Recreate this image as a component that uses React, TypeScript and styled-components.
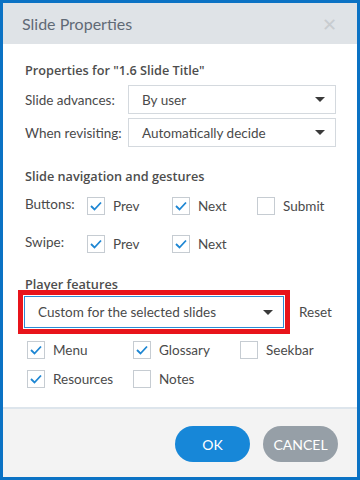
import styled, { createGlobalStyle } from "styled-components";

const GlobalStyle = createGlobalStyle`
	html, body {
		margin: 0;
		padding: 0;
		background: #fff;
	}
	body {
		font-family: Lato, "Open Sans", sans-serif;
		color: #4a4a4a;
	}
`;

const Dialog = styled.div`
	width: 360px;
	height: 480px;
	box-sizing: border-box;
	border: 3px solid #0b72c4;
	display: flex;
	flex-direction: column;
	background: #fff;
`;

const Header = styled.div`
	height: 41px;
	background: #dfe3e7;
	display: flex;
	align-items: center;
	justify-content: space-between;
	padding: 0 20px 0 19px;

	h1 {
		margin: 0;
		font-size: 16px;
		font-weight: 400;
		color: #5f6a76;
	}
`;

const Close = styled.span`
	font-size: 18px;
	color: #c8ccd0;
	line-height: 1;
`;

const Body = styled.div`
	flex: 1;
	padding: 18px 21px 0 22px;
	border-bottom: 2px solid #dde5ec;
`;

const SectionTitle = styled.div<{ $after: number }>`
	font-family: "Open Sans", sans-serif;
	font-size: 12.7px;
	line-height: 16px;
	font-weight: 600;
	color: #4d4d4d;
	margin-bottom: ${(p) => p.$after}px;
`;

const FormRow = styled.div`
	display: grid;
	grid-template-columns: 103px 1fr;
	align-items: center;
	margin-bottom: 4px;
	font-size: 13.5px;
`;

const Select = styled.div<{ $focused?: boolean }>`
	height: 29px;
	box-sizing: border-box;
	border: 1px solid ${(p) => (p.$focused ? "#2a8bd6" : "#d4d9de")};
	display: flex;
	align-items: center;
	justify-content: space-between;
	padding: 0 10px 0 13px;
	font-size: 13.5px;
	color: #4a4a4a;
	background: #fff;
`;

const Caret = styled.span`
	width: 0;
	height: 0;
	border-left: 5px solid transparent;
	border-right: 5px solid transparent;
	border-top: 5px solid #3a3a3a;
`;

const Section = styled.div<{ $gap: number }>`
	margin-top: ${(p) => p.$gap}px;
`;

const NavRow = styled.div`
	display: grid;
	grid-template-columns: 62px 85px 85px 1fr;
	align-items: center;
	height: 18px;
	margin-bottom: 20px;
	font-size: 13.5px;

	& > span:first-child {
		margin-top: -5px;
	}
`;

const Check = styled.label`
	display: flex;
	align-items: center;
	gap: 8px;
	font-size: 13.5px;
	color: #4a4a4a;
`;

const Box = styled.span`
	width: 18px;
	height: 18px;
	box-sizing: border-box;
	border: 1px solid #c6ccd2;
	background: #fff;
	display: flex;
	align-items: center;
	justify-content: center;
	flex-shrink: 0;
`;

const Checkbox = ({ label, checked }: { label: string; checked?: boolean }) => (
	<Check>
		<Box>
			{checked && (
				<svg width="12" height="10" viewBox="0 0 12 10">
					<path d="M1 5 L4.5 8.5 L11 1.5" fill="none" stroke="#1d86d3" strokeWidth="1.8" />
				</svg>
			)}
		</Box>
		{label}
	</Check>
);

const FeatureRow = styled.div`
	display: flex;
	align-items: center;
	margin-left: -7px;
`;

const Highlight = styled.div`
	width: 272px;
	height: 44px;
	box-sizing: border-box;
	border: 5px solid #e8141b;
	padding: 1px;

	& > div {
		height: 32px;
	}
`;

const Reset = styled.span`
	margin-left: 9px;
	font-size: 13.5px;
	color: #4a4a4a;
`;

const FeatureGrid = styled.div`
	display: grid;
	grid-template-columns: 106px 107px 1fr;
	row-gap: 11px;
	margin-top: 7px;
	margin-left: 2px;
`;

const Footer = styled.div`
	height: 68px;
	background: #f3f3f3;
	display: flex;
	align-items: center;
	justify-content: flex-end;
	gap: 13px;
	padding: 0 19px 0 0;
`;

const Button = styled.button<{ $primary?: boolean }>`
	width: 75px;
	height: 36px;
	border: none;
	border-radius: 18px;
	background: ${(p) => (p.$primary ? "#1787d8" : "#969fa7")};
	color: #fff;
	font-family: Lato, sans-serif;
	font-size: 14px;
	padding: 0;
	margin-top: 2px;
`;

export default function App() {
	return (
		<>
			<GlobalStyle />
			<Dialog>
				<Header>
					<h1>Slide Properties</h1>
					<Close>✕</Close>
				</Header>
				<Body>
					<SectionTitle $after={7}>Properties for "1.6 Slide Title"</SectionTitle>
					<FormRow>
						<span>Slide advances:</span>
						<Select>
							By user
							<Caret />
						</Select>
					</FormRow>
					<FormRow>
						<span>When revisiting:</span>
						<Select>
							Automatically decide
							<Caret />
						</Select>
					</FormRow>

					<Section $gap={21}>
						<SectionTitle $after={13}>Slide navigation and gestures</SectionTitle>
						<NavRow>
							<span>Buttons:</span>
							<Checkbox label="Prev" checked />
							<Checkbox label="Next" checked />
							<Checkbox label="Submit" />
						</NavRow>
						<NavRow>
							<span>Swipe:</span>
							<Checkbox label="Prev" checked />
							<Checkbox label="Next" checked />
						</NavRow>
					</Section>

					<Section $gap={23}>
						<SectionTitle $after={-2}>Player features</SectionTitle>
						<FeatureRow>
							<Highlight>
								<Select $focused>
									Custom for the selected slides
									<Caret />
								</Select>
							</Highlight>
							<Reset>Reset</Reset>
						</FeatureRow>
						<FeatureGrid>
							<Checkbox label="Menu" checked />
							<Checkbox label="Glossary" checked />
							<Checkbox label="Seekbar" />
							<Checkbox label="Resources" checked />
							<Checkbox label="Notes" />
						</FeatureGrid>
					</Section>
				</Body>
				<Footer>
					<Button $primary>OK</Button>
					<Button>CANCEL</Button>
				</Footer>
			</Dialog>
		</>
	);
}
